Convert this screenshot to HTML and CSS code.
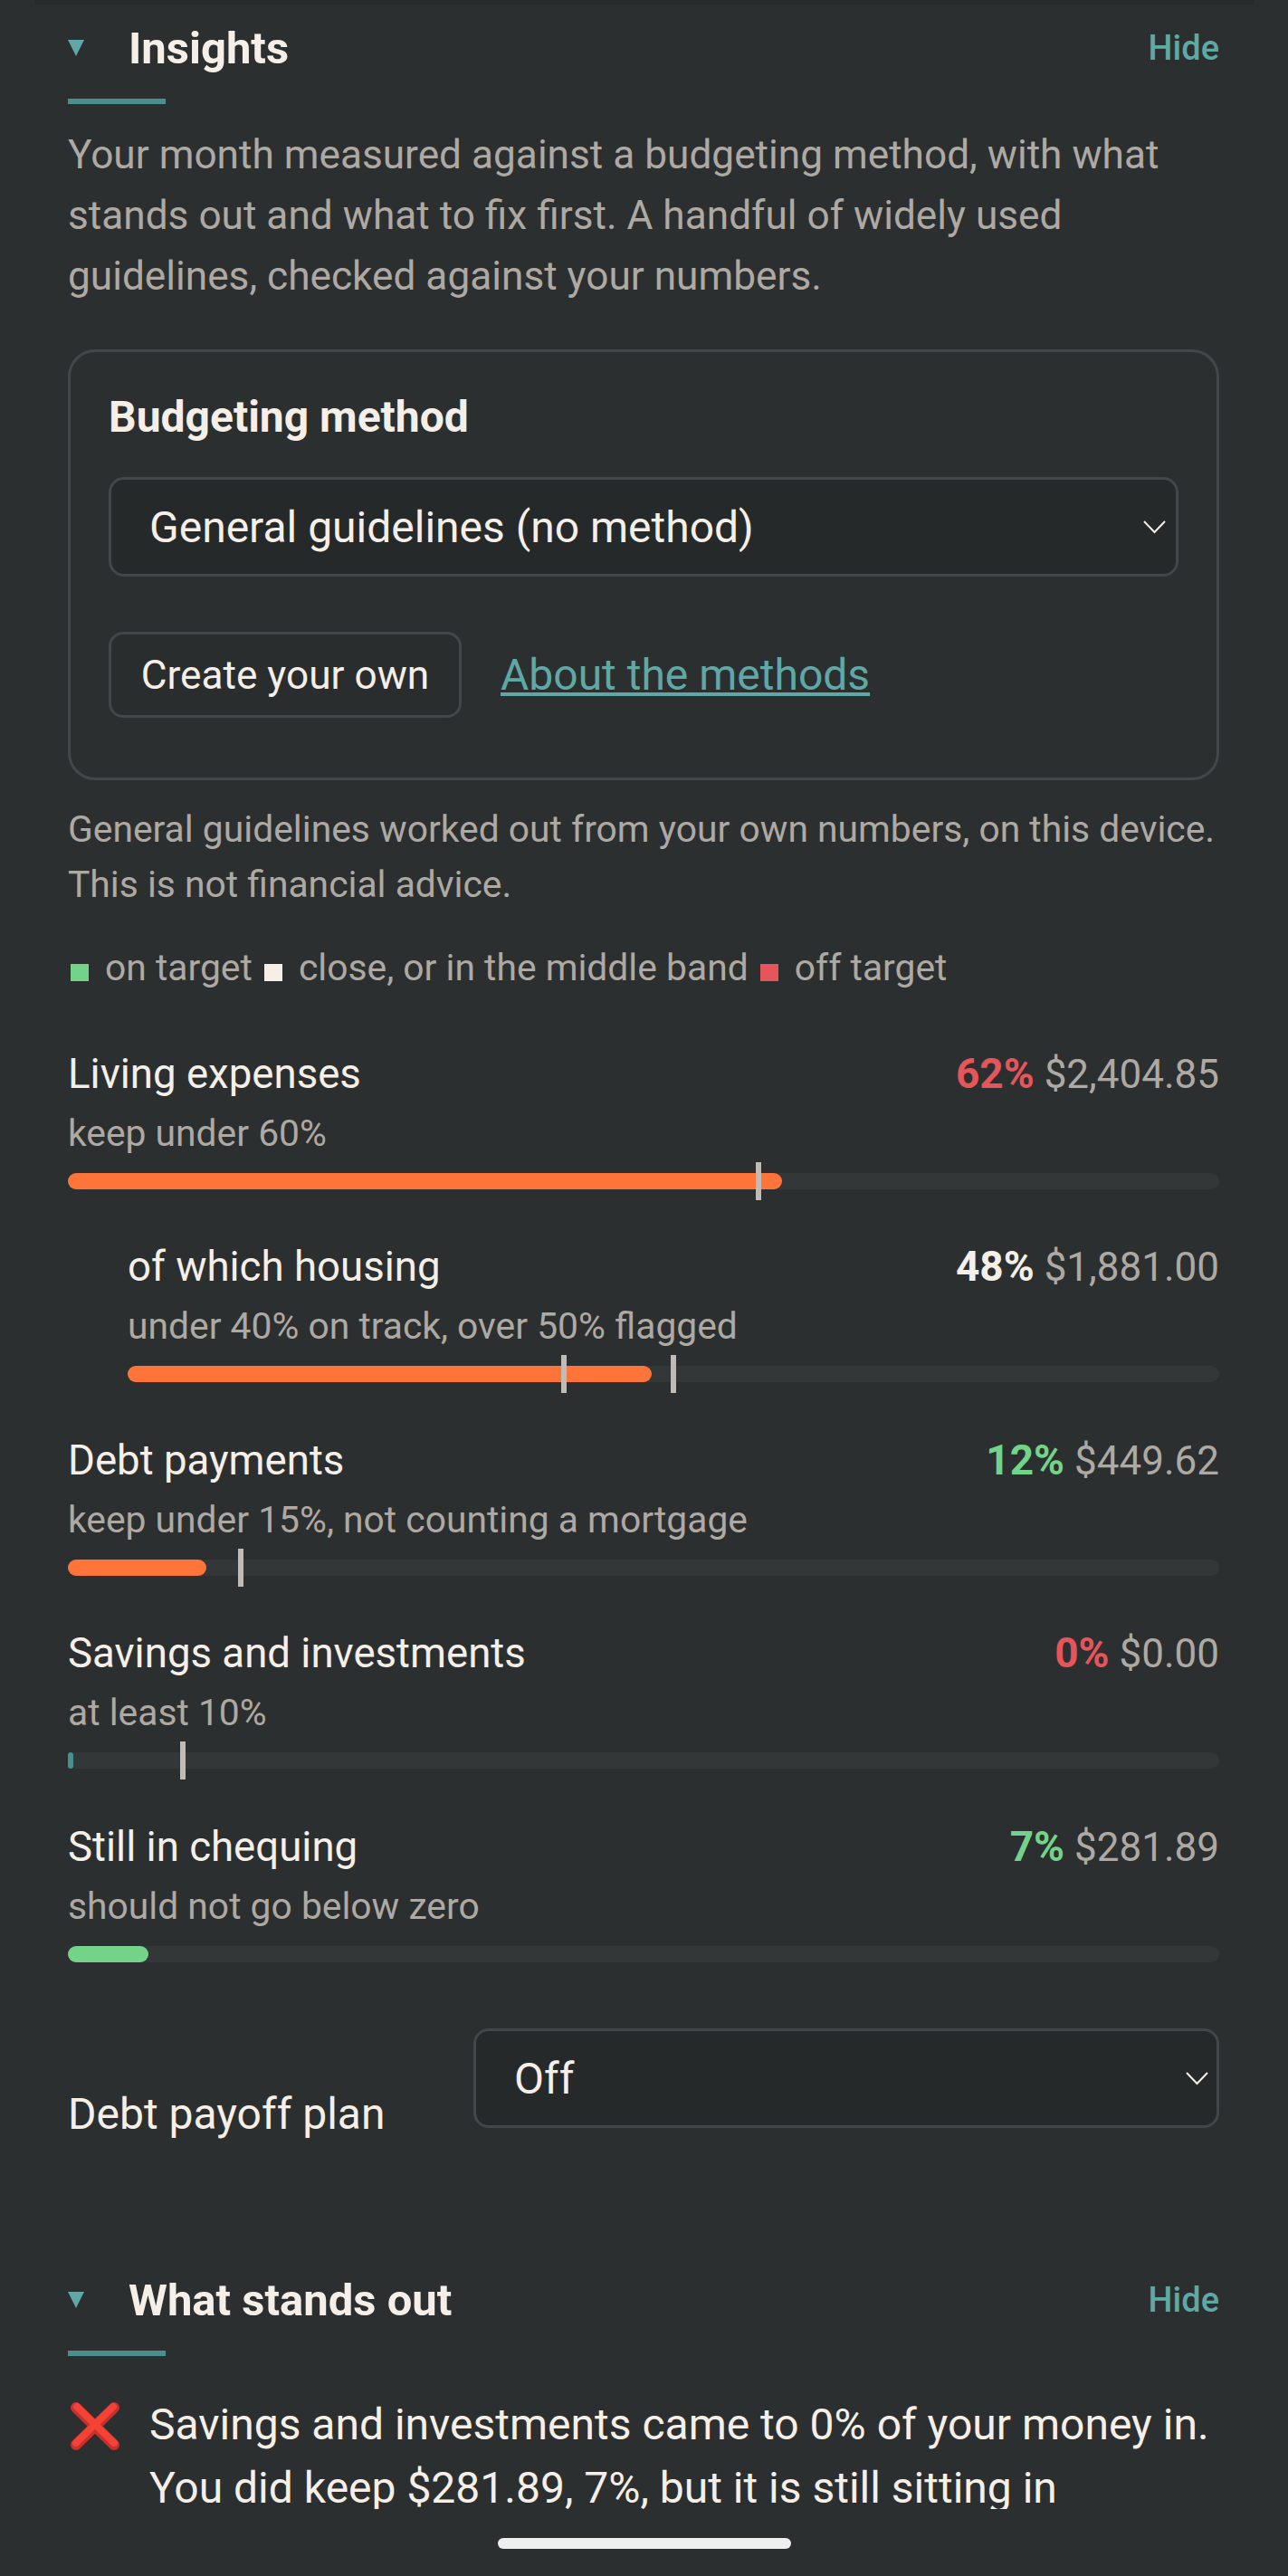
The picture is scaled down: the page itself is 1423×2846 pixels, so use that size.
FILE: index.html
```html
<!DOCTYPE html>
<html lang="en">
<head>
    <meta charset="UTF-8">
    <meta name="viewport" content="width=device-width, initial-scale=1.0">
    <title>Insights</title>
    <link rel="stylesheet" href="styles.css">
</head>
<body>
    <div class="top-edge"></div>
    <div class="container">
        <div class="section-head">
            <svg class="caret" viewBox="0 0 18 18"><polygon points="0,0 18,0 9,18"/></svg>
            <h2>Insights</h2>
            <a class="hide-link">Hide</a>
        </div>
        <div class="head-rule"></div>
        <p class="intro">Your month measured against a budgeting method, with what stands out and what to fix first. A handful of widely used guidelines, checked against your numbers.</p>

        <div class="method-card">
            <h3>Budgeting method</h3>
            <div class="select-wrap">
                <select class="select-box">
                    <option>General guidelines (no method)</option>
                </select>
                <svg class="chevron" viewBox="0 0 25 15"><polyline points="1,1 12.5,13 24,1"/></svg>
            </div>
            <div class="method-actions">
                <button type="button">Create your own</button>
                <a class="about-link">About the methods</a>
            </div>
        </div>

        <p class="note">General guidelines worked out from your own numbers, on this device. This is not financial advice.</p>
        <p class="legend">
            <span class="swatch swatch-good"></span>on target
            <span class="swatch swatch-mid"></span>close, or in the middle band
            <span class="swatch swatch-bad"></span>off target
        </p>

        <div class="meter">
            <div class="meter-top">
                <span class="meter-name">Living expenses</span>
                <span class="meter-value"><b class="bad">62%</b> $2,404.85</span>
            </div>
            <div class="meter-sub">keep under 60%</div>
            <div class="track">
                <div class="fill fill-over" style="width: 62%"></div>
                <div class="tick" style="left: 60%"></div>
            </div>
        </div>

        <div class="meter meter-nested">
            <div class="meter-top">
                <span class="meter-name">of which housing</span>
                <span class="meter-value"><b>48%</b> $1,881.00</span>
            </div>
            <div class="meter-sub">under 40% on track, over 50% flagged</div>
            <div class="track">
                <div class="fill fill-over" style="width: 48%"></div>
                <div class="tick" style="left: 40%"></div>
                <div class="tick" style="left: 50%"></div>
            </div>
        </div>

        <div class="meter">
            <div class="meter-top">
                <span class="meter-name">Debt payments</span>
                <span class="meter-value"><b class="good">12%</b> $449.62</span>
            </div>
            <div class="meter-sub">keep under 15%, not counting a mortgage</div>
            <div class="track">
                <div class="fill fill-over" style="width: 12%"></div>
                <div class="tick" style="left: 15%"></div>
            </div>
        </div>

        <div class="meter">
            <div class="meter-top">
                <span class="meter-name">Savings and investments</span>
                <span class="meter-value"><b class="bad">0%</b> $0.00</span>
            </div>
            <div class="meter-sub">at least 10%</div>
            <div class="track">
                <div class="fill fill-none" style="width: 0%"></div>
                <div class="tick" style="left: 10%"></div>
            </div>
        </div>

        <div class="meter">
            <div class="meter-top">
                <span class="meter-name">Still in chequing</span>
                <span class="meter-value"><b class="good">7%</b> $281.89</span>
            </div>
            <div class="meter-sub">should not go below zero</div>
            <div class="track">
                <div class="fill fill-ok" style="width: 7%"></div>
            </div>
        </div>

        <div class="payoff-row">
            <label for="payoff">Debt payoff plan</label>
            <div class="select-wrap payoff-select">
                <select class="select-box" id="payoff">
                    <option>Off</option>
                </select>
                <svg class="chevron" viewBox="0 0 25 15"><polyline points="1,1 12.5,13 24,1"/></svg>
            </div>
        </div>

        <div class="section-head section-head-next">
            <svg class="caret" viewBox="0 0 18 18"><polygon points="0,0 18,0 9,18"/></svg>
            <h2>What stands out</h2>
            <a class="hide-link">Hide</a>
        </div>
        <div class="head-rule"></div>
        <div class="finding">
            <svg class="cross" viewBox="0 0 54 53">
                <path class="cross-dark" d="M6 6 L48 47 M48 6 L6 47"/>
                <path class="cross-light" d="M7 5 L48 45 M47 5 L6 45"/>
            </svg>
            <p>Savings and investments came to 0% of your money in. You did keep $281.89, 7%, but it is still sitting in</p>
        </div>
    </div>
    <div class="bottom-bar"><div class="home-pill"></div></div>
</body>
</html>
```

FILE: styles.css
```css
html, body {
    margin: 0;
    padding: 0;
}
body {
    position: relative;
    height: 2846px;
    overflow: hidden;
    font-family: Roboto, "Liberation Sans", sans-serif;
    background-color: #2c2f30;
    color: #f5efe8;
}
.top-edge {
    height: 5px;
    margin: 0 38px 0 39px;
    background: #272a2b;
}
.container {
    padding: 20px 76px 0 75px;
}
.section-head {
    display: flex;
    align-items: center;
    height: 56px;
}
.section-head-next {
    margin-top: 144px;
}
.caret {
    width: 18px;
    height: 18px;
    margin-right: 49px;
    fill: #5fa8a6;
}
h2 {
    flex: 1;
    margin: 0;
    font-size: 49px;
    font-weight: 700;
}
.hide-link {
    font-size: 38px;
    font-weight: 500;
    color: #5fa8a6;
}
.head-rule {
    width: 108px;
    height: 6px;
    margin-top: 28px;
    background: #4a8f8c;
}
.intro {
    margin: 23px 0 47px;
    font-size: 44.2px;
    line-height: 67px;
    color: #aea9a2;
}
.method-card {
    box-sizing: border-box;
    height: 476px;
    padding: 44px 42px 0;
    border: 3px solid #43474a;
    border-radius: 30px;
}
h3 {
    margin: 0 0 38px;
    font-size: 48px;
    line-height: 56px;
    font-weight: 700;
}
.select-wrap {
    position: relative;
}
.select-box {
    appearance: none;
    box-sizing: border-box;
    display: block;
    width: 100%;
    height: 110px;
    padding: 0 42px;
    font-family: inherit;
    font-size: 48px;
    color: #f5efe8;
    background: #26292a;
    border: 3px solid #43474a;
    border-radius: 17px;
}
.chevron {
    position: absolute;
    top: 48px;
    right: 14px;
    width: 25px;
    height: 15px;
    fill: none;
    stroke: #f5efe8;
    stroke-width: 2;
}
.payoff-select .chevron {
    right: 12px;
}
.method-actions {
    display: flex;
    align-items: center;
    gap: 43px;
    margin-top: 61px;
}
button {
    box-sizing: border-box;
    width: 390px;
    height: 95px;
    font-family: inherit;
    font-size: 44.2px;
    color: #f5efe8;
    background: #2a2d2e;
    border: 3px solid #43474a;
    border-radius: 16px;
}
.about-link {
    font-size: 48px;
    color: #5fa8a6;
    text-decoration: underline;
}
.note {
    margin: 24px 0 0;
    font-size: 40.8px;
    line-height: 61px;
    color: #aea9a2;
}
.legend {
    margin: 30.5px 0 0;
    padding-bottom: 1.5px;
    font-size: 40.8px;
    line-height: 60px;
    color: #aea9a2;
}
.swatch {
    display: inline-block;
    width: 20px;
    height: 19px;
    margin: 0 18px 0 3px;
    vertical-align: -1px;
}
.swatch-good { background: #73d389; }
.swatch-mid { background: #f5efe8; }
.swatch-bad { background: #e5555a; }
.meter {
    margin-top: 53.5px;
}
.meter-nested {
    margin-left: 66px;
}
.meter-top {
    display: flex;
    justify-content: space-between;
    height: 66px;
    line-height: 66px;
}
.meter-name {
    font-size: 45.6px;
}
.meter-value {
    font-size: 44px;
    color: #aea9a2;
}
.meter-value b {
    font-size: 46px;
    line-height: 1;
    color: #f5efe8;
    font-weight: 700;
}
.meter-value .bad { color: #e5555a; }
.meter-value .good { color: #73d389; }
.meter-sub {
    font-size: 40.8px;
    line-height: 65px;
    color: #aea9a2;
}
.track {
    position: relative;
    height: 18px;
    margin-top: 11px;
    background: #343738;
    border-radius: 9px;
}
.fill {
    height: 100%;
    border-radius: 9px;
}
.fill-over { background: #ff7438; }
.fill-ok { background: #73d389; }
.fill-none {
    min-width: 6px;
    background: #46918e;
    border-radius: 3px;
}
.tick {
    position: absolute;
    top: -12px;
    width: 6px;
    height: 42px;
    margin-left: -3px;
    background: #c0bcb5;
}
.payoff-row {
    display: flex;
    justify-content: space-between;
    margin-top: 73.5px;
    font-size: 48px;
}
.payoff-row label {
    align-self: flex-end;
    line-height: 66px;
}
.payoff-select {
    width: 824px;
    margin-bottom: 18px;
}
.finding {
    display: flex;
    align-items: flex-start;
    gap: 33px;
    margin: 41px 0 0 3px;
}
.cross {
    flex: none;
    width: 54px;
    height: 53px;
    margin-top: 10px;
    fill: none;
    stroke-linecap: round;
}
.cross-dark {
    stroke: #c8302b;
    stroke-width: 12;
}
.cross-light {
    stroke: #f44336;
    stroke-width: 8;
}
.finding p {
    margin: 0;
    font-size: 48px;
    line-height: 70px;
}
.bottom-bar {
    position: absolute;
    left: 0;
    right: 0;
    bottom: 0;
    height: 74px;
    background: #2c2f30;
}
.home-pill {
    width: 324px;
    height: 12px;
    margin: 32px auto 0;
    background: #eef0f0;
    border-radius: 6px;
}
```
